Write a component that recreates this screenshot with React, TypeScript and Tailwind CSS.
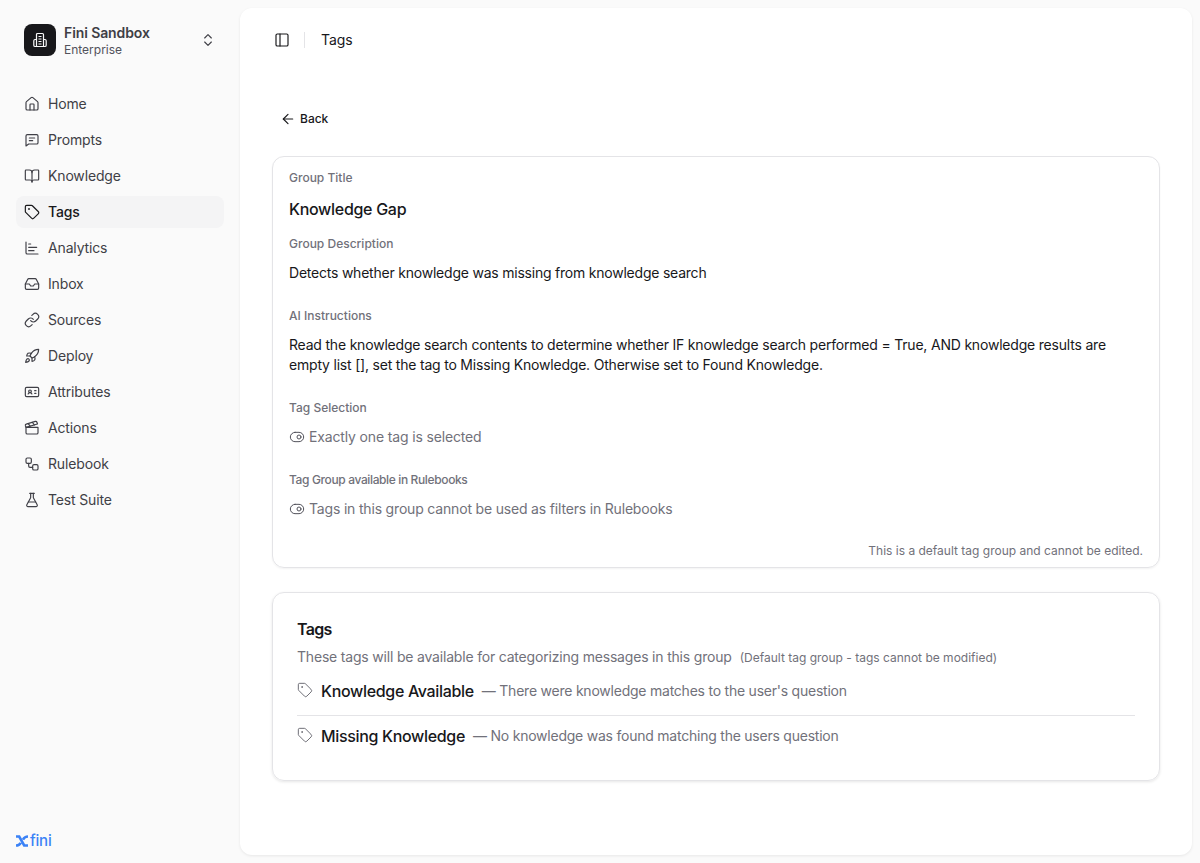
import React from "react";
import {
  House, BookOpen, Tag, ChartBar, Inbox, Link, Rocket, IdCard, Clapperboard, Workflow, FlaskConical,
  ChevronsUpDown, PanelLeft, ArrowLeft, ToggleRight,
} from "lucide-react";

function PromptIcon({ size, strokeWidth, className }: { size?: number; strokeWidth?: number; className?: string }) {
  return (
    <svg width={size} height={size} viewBox="0 0 24 24" fill="none" stroke="currentColor" strokeWidth={strokeWidth} strokeLinecap="round" strokeLinejoin="round" className={className}>
      <path d="M3 21V6a2 2 0 0 1 2-2h14a2 2 0 0 1 2 2v10a2 2 0 0 1-2 2H7z" />
      <path d="M8 9h8M8 13h5" />
    </svg>
  );
}

const nav = [
  ["Home", House], ["Prompts", PromptIcon], ["Knowledge", BookOpen], ["Tags", Tag],
  ["Analytics", ChartBar], ["Inbox", Inbox], ["Sources", Link], ["Deploy", Rocket],
  ["Attributes", IdCard], ["Actions", Clapperboard], ["Rulebook", Workflow], ["Test Suite", FlaskConical],
] as const;

function Label({ children }: { children: React.ReactNode }) {
  return <div className="text-xs leading-4 font-medium text-[#71717a]">{children}</div>;
}

function TagRow({ name, desc }: { name: string; desc: string }) {
  return (
    <div className="flex items-center h-6">
      <Tag size={16} strokeWidth={1.25} className="text-[#52525b] mr-2 -mt-0.5" />
      <span className="text-base font-medium text-[#18181b] tracking-[-0.33px]">{name}</span>
      <span className="text-sm text-[#71717a] ml-2 tracking-[-0.23px]">— {desc}</span>
    </div>
  );
}

export default function App() {
  return (
    <div className="flex h-[863px] w-[1200px] bg-[#fafafa] font-['Inter',sans-serif] overflow-hidden">
      <aside className="w-[240px] shrink-0 flex flex-col pl-4 pr-4 pt-6 pb-3">
        <div className="flex items-center h-8 pl-2 pr-2">
          <div className="w-8 h-8 rounded-lg bg-[#18181b] flex items-center justify-center">
            <svg width="16" height="16" viewBox="0 0 16 16" fill="none" stroke="#fafafa" strokeWidth="1.2" strokeLinejoin="round">
              <path d="M4.5 14.5V2.5a1 1 0 0 1 1-1h5a1 1 0 0 1 1 1v12z" />
              <path d="M4.5 7.5H3a1.5 1.5 0 0 0-1.2 1.3v4.4a1.3 1.3 0 0 0 1.3 1.3h1.4M11.5 7.5H13a1.5 1.5 0 0 1 1.2 1.3v4.4a1.3 1.3 0 0 1-1.3 1.3h-1.4" />
              <path d="M6.5 4.5h3M6.5 7h3M6.5 9.5h3M6.5 12h3" />
            </svg>
          </div>
          <div className="ml-2 flex-1 pt-0.5">
            <div className="text-sm leading-[18px] font-semibold text-[#3f3f46] tracking-[-0.1px]">Fini Sandbox</div>
            <div className="text-xs leading-4 text-[#52525b]">Enterprise</div>
          </div>
          <ChevronsUpDown size={16} strokeWidth={1.75} className="text-[#3f3f46]" />
        </div>
        <nav className="mt-8 flex flex-col flex-1">
          {nav.map(([label, Icon]) => {
            const active = label === "Tags";
            return (
              <div key={label} className={`flex items-center h-8 mb-1 px-2 rounded-lg gap-2 ${active ? "bg-[#f4f4f5] text-[#18181b] font-medium" : "text-[#3f3f46]"}`}>
                <Icon size={16} strokeWidth={1.75} className="shrink-0" />
                <span className="text-sm tracking-[-0.15px]">{label}</span>
              </div>
            );
          })}
        </nav>
        <div className="flex items-center gap-[2px] text-[#3b82f6]">
          <svg width="12" height="12" viewBox="0 0 12 12" fill="none" stroke="#3b82f6" strokeWidth="2.6">
            <path d="M0 1.5H3.2L8.2 10.5H12M12 1.5C9.2 1.5 8 2.8 7 4.6M0 10.5C2.5 10.5 3.8 9.5 4.7 7.8" />
          </svg>
          <span className="text-[15px] leading-5 font-medium tracking-[-0.2px]">fini</span>
        </div>
      </aside>
      <main className="mt-2 mb-2 mr-2 flex-1 bg-white rounded-xl shadow-[0_1px_3px_rgba(0,0,0,0.08)] px-8">
        <header className="flex items-center h-16 pl-0">
          <PanelLeft size={16} strokeWidth={1.75} className="text-[#18181b] ml-[2px]" />
          <div className="w-px h-4 bg-[#e4e4e7] ml-[14px] mr-4" />
          <span className="text-sm text-[#18181b] tracking-[-0.1px]">Tags</span>
        </header>
        <div className="mt-[37px] flex items-center h-5 gap-1 pl-2 text-xs font-medium text-[#18181b]">
          <ArrowLeft size={16} strokeWidth={1.75} />
          Back
        </div>
        <section className="mt-[27px] h-[412px] border border-[#e4e4e7] rounded-xl shadow-xs px-4 pt-3 relative">
          <div className="pt-px"><Label>Group Title</Label></div>
          <div className="mt-[11px] text-base leading-6 font-medium text-[#18181b] tracking-[-0.3px]">Knowledge Gap</div>
          <div className="mt-[15px]"><Label>Group Description</Label></div>
          <div className="mt-[11px] text-sm leading-5 text-[#18181b] tracking-[-0.22px]">Detects whether knowledge was missing from knowledge search</div>
          <div className="mt-[25px]"><Label>AI Instructions</Label></div>
          <div className="mt-[11px] text-sm leading-5 text-[#18181b] tracking-[-0.2px]">
            Read the knowledge search contents to determine whether IF knowledge search performed = True, AND knowledge results are empty list [], set the tag to Missing Knowledge. Otherwise set to Found Knowledge.
          </div>
          <div className="mt-[25px]"><Label>Tag Selection</Label></div>
          <div className="mt-[11px] flex items-center gap-1 text-sm leading-5 text-[#71717a] tracking-[-0.15px]">
            <ToggleRight size={16} strokeWidth={1.5} className="text-[#52525b]" />
            Exactly one tag is selected
          </div>
          <div className="mt-[25px] tracking-[-0.37px]"><Label>Tag Group available in Rulebooks</Label></div>
          <div className="mt-[11px] flex items-center gap-1 text-sm leading-5 text-[#71717a] tracking-[-0.18px]">
            <ToggleRight size={16} strokeWidth={1.5} className="text-[#52525b]" />
            Tags in this group cannot be used as filters in Rulebooks
          </div>
          <div className="absolute right-4 bottom-2 text-xs leading-4 text-[#71717a]">This is a default tag group and cannot be edited.</div>
        </section>
        <section className="mt-6 h-[189px] border border-[#e4e4e7] rounded-xl shadow-[0_1px_3px_rgba(0,0,0,0.1)] px-6 pt-6">
          <div className="text-base leading-6 font-semibold text-[#18181b] tracking-[-0.7px]">Tags</div>
          <div className="mt-[6px] flex items-baseline text-sm leading-5 text-[#71717a] tracking-[-0.19px]">
            These tags will be available for categorizing messages in this group
            <span className="ml-2 text-xs tracking-normal">(Default tag group - tags cannot be modified)</span>
          </div>
          <div className="mt-[12px] pb-3 border-b border-[#e4e4e7]">
            <TagRow name="Knowledge Available" desc="There were knowledge matches to the user's question" />
          </div>
          <div className="mt-2">
            <TagRow name="Missing Knowledge" desc="No knowledge was found matching the users question" />
          </div>
        </section>
      </main>
    </div>
  );
}
